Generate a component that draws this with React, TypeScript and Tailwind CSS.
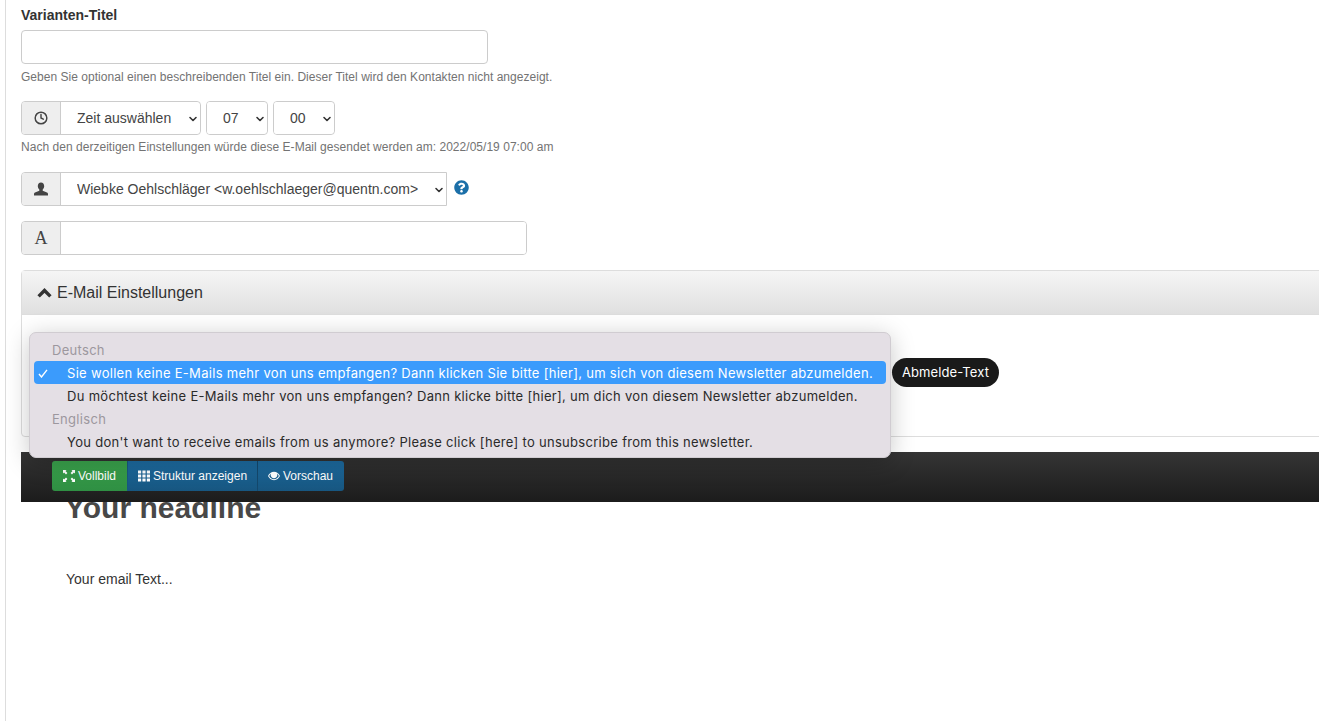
import { ChevronDown, Clock } from "lucide-react";
import { FaQuestionCircle } from "react-icons/fa";

const languages = [
  {
    name: "Deutsch",
    items: [
      {
        text: "Sie wollen keine E-Mails mehr von uns empfangen? Dann klicken Sie bitte [hier], um sich von diesem Newsletter abzumelden.",
        selected: true,
      },
      {
        text: "Du möchtest keine E-Mails mehr von uns empfangen? Dann klicke bitte [hier], um dich von diesem Newsletter abzumelden.",
        selected: false,
      },
    ],
  },
  {
    name: "Englisch",
    items: [
      {
        text: "You don't want to receive emails from us anymore? Please click [here] to unsubscribe from this newsletter.",
        selected: false,
      },
    ],
  },
];

function Addon({ children }: { children: React.ReactNode }) {
  return (
    <div className="w-[39px] h-full shrink-0 flex items-center justify-center bg-[#eeeeee] border-r border-[#cccccc] text-[#444444]">
      {children}
    </div>
  );
}

function Select({ value, className }: { value: string; className: string }) {
  return (
    <div className={"relative h-full " + className}>
      <select className="w-full h-full appearance-none bg-white pl-[16px] text-[14px] text-[#444444] outline-none rounded-r-[4px]">
        <option>{value}</option>
      </select>
      <ChevronDown
        size={12}
        strokeWidth={3.2}
        className="absolute right-[1px] top-[11px] text-[#333333] pointer-events-none"
      />
    </div>
  );
}

function UserIcon() {
  return (
    <svg width="14" height="14" viewBox="0 0 14 14" fill="#444444">
      <path d="M7 0.5c-2 0-3.2 1.5-3.2 3.6 0 1.500.6 2.800 1.500 3.500v1.100L1 10.600C.4 10.900 0 11.400 0 12v1.500h14V12c0-.6-.4-1.100-1-1.400L8.700 8.700V7.600c.9-.7 1.500-2 1.500-3.500C10.200 2 9 .5 7 .5z" />
    </svg>
  );
}

function FullscreenIcon() {
  return (
    <svg width="12" height="12" viewBox="0 0 12 12" fill="#ffffff">
      <path d="M0 0h3.600L2.500 1.100 4.400 3 3 4.400 1.100 2.500 0 3.600zM12 0v3.600L10.900 2.500 9 4.400 7.600 3 9.500 1.100 8.400 0zM0 12V8.400l1.100 1.100L3 7.600 4.400 9 2.500 10.900 3.600 12zM12 12H8.400l1.100-1.100L7.600 9 9 7.600l1.900 1.900L12 8.400z" />
    </svg>
  );
}

function GridIcon() {
  return (
    <svg width="12" height="12" viewBox="0 0 12 12" fill="#ffffff">
      <path d="M0 0.500h3.200v3H0zM4.400 0.500h3.200v3H4.400zM8.800 0.500H12v3H8.800zM0 4.500h3.200v3H0zM4.400 4.500h3.200v3H4.400zM8.800 4.500H12v3H8.800zM0 8.500h3.200v3H0zM4.400 8.500h3.200v3H4.400zM8.800 8.500H12v3H8.800z" />
    </svg>
  );
}

function EyeIcon() {
  return (
    <svg width="12" height="10" viewBox="0 0 13 10" fill="#ffffff">
      <path
        fillRule="evenodd"
        d="M6.500 0.500C3.500 0.500 1.200 2.500 0 5c1.200 2.500 3.500 4.500 6.500 4.500S11.800 7.500 13 5C11.800 2.500 9.500 0.500 6.500 0.500zM3.400 2.300C2.500 2.900 1.800 3.900 1.300 5c.9 1.900 2.900 3.400 5.200 3.400S10.800 6.900 11.700 5c-.5-1.100-1.200-2.100-2.100-2.700.3.500.5 1.100.5 1.700 0 2-1.600 3.500-3.600 3.500S2.900 6 2.900 4c0-.6.200-1.200.5-1.700z"
      />
      <circle cx="5" cy="3.500" r="1.100" />
    </svg>
  );
}

export default function App() {
  return (
    <div className="h-screen overflow-hidden bg-white font-['Liberation_Sans',Arial,sans-serif] text-[#333333]">
      <div className="h-full ml-[5px] border-l border-[#dddddd] pl-[15px] pt-[8px]">
        <label className="block text-[14px] leading-[15px] font-bold text-[#333333]">Varianten-Titel</label>
        <input className="block mt-[7px] w-[467px] h-[34px] border border-[#cccccc] rounded-[4px] bg-white" />
        <p className="mt-[6px] text-[12px] leading-[15px] text-[#737373] tracking-[0.03px]">
          Geben Sie optional einen beschreibenden Titel ein. Dieser Titel wird den Kontakten nicht angezeigt.
        </p>

        <div className="mt-[16px] flex gap-[5px] h-[34px]">
          <div className="flex h-full w-[180px] border border-[#cccccc] rounded-[4px] overflow-hidden">
            <Addon>
              <Clock size={14} strokeWidth={2.5} />
            </Addon>
            <Select value="Zeit auswählen" className="flex-1" />
          </div>
          <div className="h-full w-[62px] border border-[#cccccc] rounded-[4px] overflow-hidden">
            <Select value="07" className="w-full" />
          </div>
          <div className="h-full w-[62px] border border-[#cccccc] rounded-[4px] overflow-hidden">
            <Select value="00" className="w-full" />
          </div>
        </div>
        <p className="mt-[5px] text-[12px] leading-[15px] text-[#737373] tracking-[0.03px]">
          Nach den derzeitigen Einstellungen würde diese E-Mail gesendet werden am: 2022/05/19 07:00 am
        </p>

        <div className="mt-[17px] flex items-start gap-[7px]">
          <div className="flex h-[34px] w-[426px] border border-[#cccccc] rounded-l-[4px] overflow-hidden">
            <Addon>
              <UserIcon />
            </Addon>
            <Select value="Wiebke Oehlschläger <w.oehlschlaeger@quentn.com>" className="flex-1" />
          </div>
          <FaQuestionCircle size={15} className="mt-[8px] text-[#1b6fa8]" />
        </div>

        <div className="mt-[15px] flex h-[34px] w-[506px] border border-[#cccccc] rounded-[4px] overflow-hidden">
          <Addon>
            <span className="font-['Liberation_Serif',serif] text-[18px]">A</span>
          </Addon>
          <input className="flex-1 bg-white" />
        </div>

        <div className="relative mt-[15px] mr-[-10px] h-[167px] border border-[#dddddd] rounded-[4px]">
          <div className="flex items-center gap-[5px] h-[44px] pl-[15px] bg-gradient-to-b from-[#f5f5f5] to-[#e0e0e0] border-b border-[#dddddd] text-[16px] text-[#333333]">
            <svg width="15" height="10" viewBox="0 0 15 10">
              <path d="M1.600 8.400L7.500 2.500 13.400 8.400" fill="none" stroke="#333333" strokeWidth="3.400" />
            </svg>
            E-Mail Einstellungen
          </div>

          {/* aufgeklapptes Select-Menue */}
          <div className="absolute z-20 left-[7px] top-[61px] w-[862px] h-[126px] px-[4px] pt-[5px] bg-[#e4dfe5] border border-[#d0ccd1] rounded-[7px] shadow-[0_4px_24px_rgba(0,0,0,0.22)] font-['Inter',sans-serif] text-[13px] leading-[24px] tracking-[0.3px] text-[#2a2a2a]">
            {languages.map((lang) => (
              <div key={lang.name}>
                <div className="h-[23px] pl-[18px] text-[#9c979e]">{lang.name}</div>
                {lang.items.map((item) => (
                  <div
                    key={item.text}
                    className={
                      "relative h-[23px] pl-[33px] rounded-[4px] whitespace-nowrap " +
                      (item.selected ? "bg-[#3b9bfc] text-white" : "")
                    }
                  >
                    {item.selected && (
                      <svg
                        width="10"
                        height="9"
                        viewBox="0 0 10 9"
                        className="absolute left-[4px] top-[8px]"
                      >
                        <path d="M1 5l2.500 3L9 0.800" fill="none" stroke="#ffffff" strokeWidth="1.400" />
                      </svg>
                    )}
                    {item.text}
                  </div>
                ))}
              </div>
            ))}
          </div>

          <div className="absolute z-20 left-[870px] top-[87px] h-[29px] w-[107px] flex items-center justify-center pt-[1px] rounded-full bg-[#1a1a1a] font-['Inter',sans-serif] text-[13px] tracking-[0.1px] text-white">
            Abmelde-Text
          </div>
        </div>

        <div className="relative z-10 mt-[15px] mr-[-10px] h-[50px] pl-[31px] pt-[9px] bg-gradient-to-b from-[#353535] to-[#1c1c1c]">
          <div className="flex w-fit h-[30px] rounded-[3px] overflow-hidden text-[12px] text-white">
            <div className="flex items-center gap-[3px] w-[75px] pl-[11px] bg-gradient-to-b from-[#3aa24c] to-[#2f8f43]">
              <FullscreenIcon />
              Vollbild
            </div>
            <div className="flex items-center gap-[3px] w-[130px] pl-[10px] bg-gradient-to-b from-[#1d6ba0] to-[#175680] border-l border-[#175680]">
              <GridIcon />
              Struktur anzeigen
            </div>
            <div className="flex items-center gap-[3px] w-[87px] pl-[10px] bg-gradient-to-b from-[#1d6ba0] to-[#175680] border-l border-[#14486c]">
              <EyeIcon />
              Vorschau
            </div>
          </div>
        </div>

        <div className="-mt-[12px] pl-[44px]">
          <h1 className="text-[30px] leading-[36px] font-bold text-[#484848]">Your headline</h1>
          <p className="mt-[43px] pl-[1px] text-[14px] leading-[20px] text-[#333333]">Your email Text...</p>
        </div>
      </div>
    </div>
  );
}
